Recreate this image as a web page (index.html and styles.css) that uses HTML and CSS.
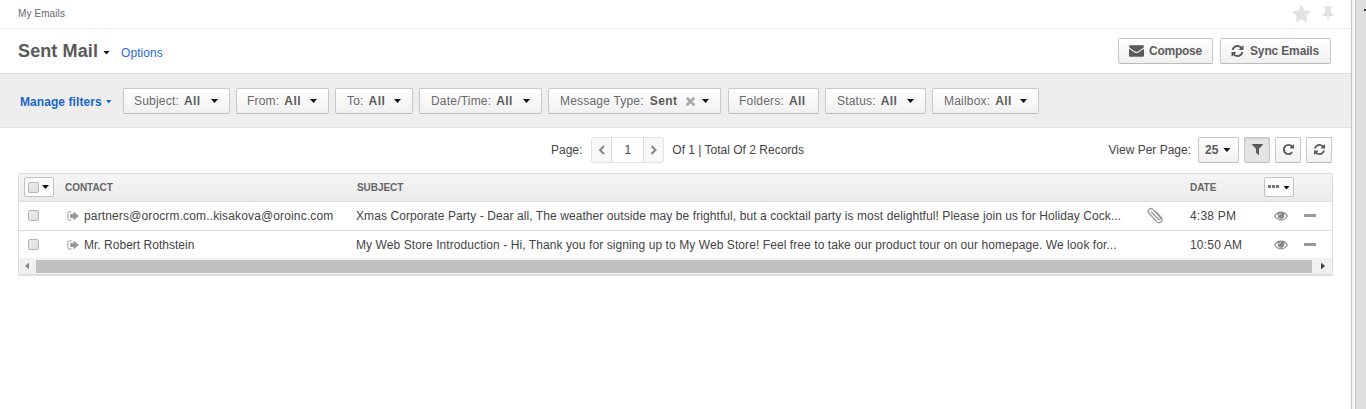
FILE: index.html
```html
<!DOCTYPE html>
<html lang="en">
<head>
<meta charset="utf-8">
<title>Sent Mail</title>
<link rel="stylesheet" href="styles.css">
</head>
<body>
<svg class="defs" width="0" height="0" aria-hidden="true">
  <symbol id="star" viewBox="0 0 1792 1792"><path d="M1728 647q0 22-26 48l-363 354 86 500q1 7 1 20 0 21-10.5 35.5t-30.5 14.5q-19 0-40-12l-449-236-449 236q-22 12-40 12-21 0-31.5-14.5t-10.5-35.5q0-6 2-20l86-500-364-354q-25-27-25-48 0-37 56-46l502-73 225-455q19-41 49-41t49 41l225 455 502 73q56 9 56 46z"/></symbol>
  <symbol id="pin" viewBox="0 0 12 16"><path d="M2.5 0h7q.8 0 .8.9t-.8.9H9v4.7q2.8 1 2.8 3.500H7L6.300 15.600h-.6L5.100 10H.2Q.2 7.500 3 6.500V1.800h-.5q-.8 0-.8-.9T2.500 0z"/></symbol>
  <symbol id="refresh" viewBox="128 128 1536 1536"><path d="M1639 1056q0 5-1 7-64 268-268 434.500t-478 166.500q-146 0-282.500-55t-243.500-157l-129 129q-19 19-45 19t-45-19-19-45v-448q0-26 19-45t45-19h448q26 0 45 19t19 45-19 45l-137 137q71 66 161 102t187 36q134 0 250-65t186-179q11-17 53-117 8-23 30-23h192q13 0 22.500 9.500t9.500 22.500zm25-800v448q0 26-19 45t-45 19h-448q-26 0-45-19t-19-45 19-45l138-138q-148-137-349-137-134 0-250 65t-186 179q-11 17-53 117-8 23-30 23h-199q-13 0-22.500-9.500t-9.500-22.500v-7q65-268 270-434.500t480-166.500q146 0 284 55.500t245 156.500l130-129q19-19 45-19t45 19 19 45z"/></symbol>
  <symbol id="repeat" viewBox="128 128 1536 1536"><path d="M1664 256v448q0 26-19 45t-45 19h-448q-42 0-59-40-17-39 14-69l138-138q-148-137-349-137-104 0-198.500 40.500t-163.500 109.500-109.500 163.500-40.500 198.500 40.500 198.500 109.500 163.500 163.500 109.500 198.500 40.500q119 0 225-52t179-147q7-10 23-12 15 0 25 9l137 138q9 8 9.500 20.500t-7.500 22.500q-109 132-264 204.500t-327 72.500q-156 0-298-61t-245-164-164-245-61-298 61-298 164-245 245-164 298-61q147 0 284.500 55.500t244.500 156.500l130-129q29-31 70-14 39 17 39 59z"/></symbol>
  <symbol id="filter" viewBox="192 256 1408 1408"><path d="M1595 295q17 41-14 70l-493 493v742q0 42-39 59-13 5-25 5-27 0-45-19l-256-256q-19-19-19-45v-486l-493-493q-31-29-14-70 17-39 59-39h1280q42 0 59 39z"/></symbol>
  <symbol id="mail" viewBox="0 0 15 12"><path d="M1 .3h13q1 0 1 1-.1 1-1.200 1.900L8.800 6.600q-1.300.8-2.600 0L1.200 3.200Q0 2.300 0 1.300 0 .3 1 .3zM0 3.700l5.700 3.900q1.800 1.100 3.600 0L15 3.700v6.800q0 1.200-1.200 1.200H1.200Q0 11.700 0 10.500z"/></symbol>
  <symbol id="outgoing" viewBox="0 0 12 10"><path d="M4.500.9H2.600Q.8.900.8 2.700v4.600q0 1.800 1.800 1.800h1.900" fill="none" stroke="currentColor" stroke-width="1"/><path d="M6.600.6 11.900 5 6.600 9.400V7H3.200V3h3.400z"/></symbol>
  <symbol id="eye" viewBox="0 0 14 10"><path d="M.6 5Q3 1.100 7 1.100T13.400 5Q11 8.900 7 8.900T.6 5z" fill="none" stroke="currentColor" stroke-width="1.100"/><circle cx="7" cy="4.400" r="3.300"/><path d="M5.100 4.500Q5.200 2.600 7 2.500" fill="none" stroke="#fff" stroke-width=".7"/></symbol>
  <symbol id="clip" viewBox="0 0 16 17"><path d="M4.600 5.200 11 12q1.200 1 2 .1t0-2L6 2.600Q4.100.6 2.200 2.300T2 6.300l7.600 8.300q2.200 2.200 4.400.3t.3-4.500L8.400 4.200" fill="none" stroke="currentColor" stroke-width="1.300" stroke-linecap="round"/></symbol>
</svg>
<div class="shell">
  <main class="page">
    <header class="crumbs">
      <span class="crumb">My Emails</span>
      <svg class="i-star"><use href="#star"/></svg>
      <svg class="i-pin"><use href="#pin"/></svg>
    </header>
    <div class="titlebar">
      <h1>Sent Mail</h1><i class="caret"></i>
      <a class="options">Options</a>
      <div class="actions">
        <button class="btn compose"><svg class="i-mail"><use href="#mail"/></svg><b>Compose</b></button>
        <button class="btn sync"><svg class="i-sync"><use href="#refresh"/></svg><b>Sync Emails</b></button>
      </div>
    </div>
    <div class="filters">
      <a class="manage"><span>Manage filters</span><i class="caret blue"></i></a>
      <button class="btn f-subject"><span>Subject:</span><b>All</b><i class="caret"></i></button>
      <button class="btn f-from"><span>From:</span><b>All</b><i class="caret"></i></button>
      <button class="btn f-to"><span>To:</span><b>All</b><i class="caret"></i></button>
      <button class="btn f-date"><span>Date/Time:</span><b>All</b><i class="caret"></i></button>
      <button class="btn f-type"><span>Message Type:</span><b>Sent</b><svg class="i-x" viewBox="0 0 10 10"><path d="M1.500 1.500l7 7M8.500 1.500l-7 7"/></svg><i class="caret"></i></button>
      <button class="btn f-folders"><span>Folders:</span><b>All</b></button>
      <button class="btn f-status"><span>Status:</span><b>All</b><i class="caret"></i></button>
      <button class="btn f-mailbox"><span>Mailbox:</span><b>All</b><i class="caret"></i></button>
    </div>
    <div class="toolbar">
      <span class="page-label">Page:</span>
      <div class="pager">
        <svg viewBox="0 0 18 24"><path d="M11.500 8 7.500 12l4 4"/></svg>
        <span class="num">1</span>
        <svg viewBox="0 0 18 24"><path d="M7 8l4 4-4 4"/></svg>
      </div>
      <span class="total">Of 1 | Total Of 2 Records</span>
      <div class="tools">
        <span class="per-page">View Per Page:</span>
        <button class="btn size"><b>25</b><i class="caret"></i></button>
        <button class="btn sq active"><svg><use href="#filter"/></svg></button>
        <button class="btn sq"><svg><use href="#repeat"/></svg></button>
        <button class="btn sq"><svg><use href="#refresh"/></svg></button>
      </div>
    </div>
    <section class="grid">
      <div class="row head">
        <div class="c-check"><span class="mini"><i class="box"></i><i class="caret"></i></span></div>
        <div class="c-contact">CONTACT</div>
        <div class="c-subject">SUBJECT</div>
        <div class="c-clip"></div>
        <div class="c-date">DATE</div>
        <div class="c-act"><span class="mini more"><i class="dots"></i><i class="caret"></i></span></div>
      </div>
      <div class="row first">
        <div class="c-check"><i class="box"></i></div>
        <div class="c-contact"><svg class="i-out"><use href="#outgoing"/></svg><span class="email">partners@orocrm.com..kisakova@oroinc.com</span></div>
        <div class="c-subject">Xmas Corporate Party - Dear all, The weather outside may be frightful, but a cocktail party is most delightful! Please join us for Holiday Cock...</div>
        <div class="c-clip"><svg class="i-clip"><use href="#clip"/></svg></div>
        <div class="c-date">4:38 PM</div>
        <div class="c-act"><svg class="i-eye"><use href="#eye"/></svg><i class="minus"></i></div>
      </div>
      <div class="row second">
        <div class="c-check"><i class="box"></i></div>
        <div class="c-contact"><svg class="i-out"><use href="#outgoing"/></svg><span class="name">Mr. Robert Rothstein</span></div>
        <div class="c-subject">My Web Store Introduction - Hi, Thank you for signing up to My Web Store! Feel free to take our product tour on our homepage. We look for...</div>
        <div class="c-clip"></div>
        <div class="c-date">10:50 AM</div>
        <div class="c-act"><svg class="i-eye"><use href="#eye"/></svg><i class="minus"></i></div>
      </div>
      <div class="scroll"><i class="left"></i><div class="thumb"></div><i class="right"></i></div>
    </section>
  </main>
  <aside class="rail"><i></i></aside>
</div>
</body>
</html>
```
FILE: styles.css
```css
* { box-sizing: border-box; }
body { margin: 0; font: 12px/16px "Liberation Sans", Arial, sans-serif; color: #444; background: #fff; overflow: hidden; }
svg { display: block; flex: none; fill: currentColor; }
.defs { position: absolute; }
.shell { display: flex; height: 409px; }
.page { width: 1351px; flex: none; }
.rail { flex: 1; border-left: 1px solid #c4c4c4; background: linear-gradient(90deg, #f4f4f4 3px, #c4c4c4 3px, #c4c4c4 4px, #dedede 4px); display: flex; justify-content: flex-end; padding-top: 9px; }
.rail i { width: 2px; height: 2px; background: #333; }

.crumbs { height: 29px; border-bottom: 1px solid #eee; display: flex; align-items: center; padding: 0 17px 0 18px; color: #666; font-size: 10px; letter-spacing: .1px; }
.i-star { width: 19px; height: 19px; margin-left: auto; color: #e2e2e2; }
.i-pin { width: 12px; height: 16px; margin: 0 0 0 11px; color: #e2e2e2; }

.titlebar { height: 44px; display: flex; align-items: center; padding: 0 20px 0 18px; }
h1 { margin: 0; font-size: 18px; line-height: 22px; width: 80px; white-space: nowrap; color: #5a5a5a; letter-spacing: .12px; }
.caret { display: block; flex: none; width: 7px; height: 4px; background: #111; clip-path: polygon(0 0, 100% 0, 50% 100%); }
.titlebar > .caret { margin: 3px 0 0 5px; }
.options { margin: 4px 0 0 11px; color: #2a6bd0; letter-spacing: .07px; }
.actions { margin-left: auto; display: flex; gap: 7px; }

.btn { font: 12px/16px "Liberation Sans", Arial, sans-serif; height: 26px; margin: 0; padding: 0 0 1px 10px; display: flex; align-items: center; flex: none; white-space: nowrap; color: #6b6b6b; border: 1px solid #c8c8c8; border-bottom-color: #bababa; border-radius: 2px; background: linear-gradient(#fff, #f0f0f0); }
.btn b { color: #5c5c5c; }
.compose { width: 95px; }
.compose b { margin-left: 5px; letter-spacing: -.25px; }
.sync { width: 111px; }
.sync b { margin-left: 6px; letter-spacing: -.15px; }
.i-mail { width: 15px; height: 12px; }
.i-sync { width: 13px; height: 12px; }
.btn svg { color: #5a5a5a; }

.filters { height: 55px; border-top: 1px solid #ddd; border-bottom: 1px solid #e0e0e0; background: #eee; display: flex; align-items: center; gap: 6px; padding-left: 20px; }
.manage { width: 97px; display: flex; align-items: center; color: #1b66c9; font-weight: bold; padding-top: 2px; letter-spacing: .07px; }
.caret.blue { background: #1b66c9; margin: 0 0 0 4px; width: 6px; }
.filters .btn { letter-spacing: .2px; padding-bottom: 0; }
.filters b { margin-left: 5px; letter-spacing: .4px; }
.filters .btn .caret { margin: 1px 11px 0 auto; }
.f-subject { width: 107px; }
.f-from { width: 93px; }
.f-to { width: 78px; padding-left: 11px; }
.f-date { width: 123px; padding-left: 11px; }
.f-type { width: 173px; padding-left: 11px; }
.f-type b { margin-left: 6px; }
.f-folders { width: 91px; margin-left: 1px; }
.f-status { width: 101px; padding-left: 11px; }
.f-mailbox { width: 107px; padding-left: 11px; }
.filters .i-x { width: 11px; height: 11px; margin: 1px 0 0 8px; color: #aaa; stroke: currentColor; stroke-width: 2.6; }

.toolbar { height: 45px; display: flex; align-items: center; padding: 0 19px 1px 551px; }
.pager { display: flex; height: 26px; margin-left: 9px; width: 73px; border: 1px solid #e2e2e2; border-radius: 3px; background: #f8f8f8; }
.pager svg { width: 19px; height: 24px; fill: none; stroke: #888; stroke-width: 2; }
.num { flex: 1; background: #fff; border: 1px solid #ddd; border-width: 0 1px; text-align: center; line-height: 24px; }
.total { margin-left: 8px; }
.tools { margin-left: auto; display: flex; align-items: center; }
.size { width: 41px; margin-left: 7px; padding: 0 0 0 6px; }
.size .caret { margin-left: 5px; }
.sq { width: 26px; margin-left: 5px; padding: 0 0 1px; justify-content: center; }
.sq svg { width: 11px; height: 11px; }
.active { background: #e4e4e4; box-shadow: inset 0 1px 2px #ccc; }

.grid { margin: 0 18px 0 18px; height: 103px; border: 1px solid #ddd; border-width: 1px 1px 2px; border-radius: 3px; overflow: hidden; }
.row { display: flex; align-items: center; white-space: nowrap; }
.row.first { height: 29px; border-bottom: 1px solid #ddd; padding-bottom: 1px; }
.row.second { height: 27px; }
.head { height: 28px; padding-bottom: 1px; border-bottom: 1px solid #ddd; background: linear-gradient(#f5f5f5, #ebebeb); font-size: 10px; font-weight: bold; color: #666; }
.c-check { width: 46px; padding-left: 9px; }
.head .c-check { padding-left: 5px; }
.c-contact { width: 291px; display: flex; align-items: center; padding-left: 1px; }
.head .c-contact { padding-left: 0; }
.head .c-contact, .head .c-subject, .head .c-date { padding-top: 2px; letter-spacing: -.05px; }
.c-subject { width: 791px; letter-spacing: .08px; }
.head .c-subject { padding-left: 1px; }
.email { letter-spacing: .14px; }
.name { letter-spacing: .02px; }
.c-clip { width: 43px; }
.c-date { width: 73px; letter-spacing: .2px; }
.c-act { display: flex; align-items: center; flex: 1; padding-left: 11px; }
.head .c-act { padding-left: 1px; }
.box { display: block; width: 11px; height: 11px; border: 1px solid #b5b5b5; border-radius: 2px; background: linear-gradient(135deg, #eee, #ddd); }
.mini { display: flex; align-items: center; width: 30px; height: 20px; border: 1px solid #c2c2c2; border-radius: 2px; background: #fcfcfc; padding-left: 3px; }
.mini .caret { margin-left: 3px; }
.dots { flex: none; width: 11px; height: 3px; margin-top: -1px; background: repeating-linear-gradient(90deg, #777 0 3px, transparent 3px 4px); }
.mini.more .caret { margin: 1px 0 0 4px; }
.i-out { width: 12px; height: 10px; color: #999; margin: 0 5px 0 1px; }
.i-eye { width: 14px; height: 10px; color: #888; }
.i-clip { width: 16px; height: 17px; color: #999; }
.minus { width: 12px; height: 3px; background: #999; margin: 0 0 0 16px; }
.scroll { height: 16px; background: #f1f1f1; display: flex; align-items: center; }
.left, .right { width: 4px; height: 7px; }
.left { background: #888; clip-path: polygon(100% 0, 0 50%, 100% 100%); margin: 0 7px 0 6px; }
.right { background: #444; clip-path: polygon(0 0, 100% 50%, 0 100%); margin: 0 7px 0 9px; }
.thumb { flex: 1; height: 13px; background: #c1c1c1; }
```
